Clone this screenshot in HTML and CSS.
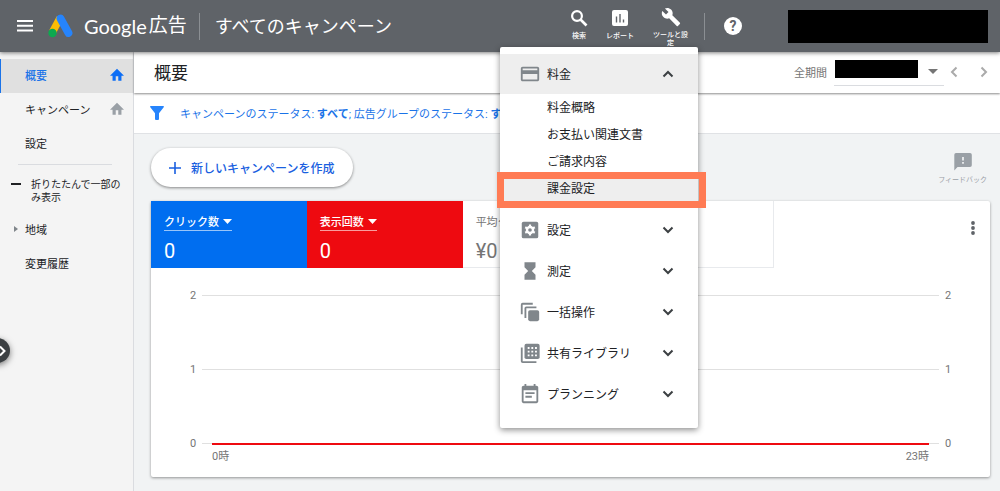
FILE: index.html
```html
<!DOCTYPE html>
<html lang="ja">
<head>
<meta charset="utf-8">
<title>Google 広告</title>
<meta name="viewport" content="width=device-width, initial-scale=1">
<link rel="stylesheet" href="styles.css">
</head>
<body>
<div class="app">
  <header class="topbar">
    <button class="menu-button" aria-label="メニュー">
      <svg width="16" height="12" viewBox="0 0 16 12"><path fill="#fff" d="M0 0h16v2H0zM0 4.7h16v2H0zM0 9.4h16v2H0z"/></svg>
    </button>
    <svg class="logo" width="26" height="24" viewBox="0 0 26 24" aria-hidden="true">
      <path stroke="#fbbc04" stroke-width="7.400" d="M12 4 4.500 18"/>
      <path stroke="#2684fc" stroke-width="7.800" stroke-linecap="round" d="m12.500 4.500 8 14.500"/>
      <circle cx="4.500" cy="19" r="4.200" fill="#0ca94f"/>
    </svg>
    <div class="brand"><span class="brand-name">Google</span><span>広告</span></div>
    <div class="bar-divider"></div>
    <div class="page-name">すべてのキャンペーン</div>

    <div class="tools">
      <button class="tool">
        <svg width="18" height="18" viewBox="0 0 18 18"><circle cx="7" cy="7" r="4.9" fill="none" stroke="#fff" stroke-width="2.2"/><path stroke="#fff" stroke-width="2.6" d="m10.5 10.5 6 6"/></svg>
        <span>検索</span>
      </button>
      <button class="tool">
        <svg width="18" height="18" viewBox="0 0 18 18"><rect x="1" y="1" width="16" height="16" rx="2" fill="#fff"/><path stroke="#5f6368" stroke-width="1.4" d="M5.5 7.5v6M9 5v8.500M12.500 10.500v3"/></svg>
        <span>レポート</span>
      </button>
      <div class="tool-anchor">
        <button class="tool tool-wide" aria-expanded="true">
          <svg width="20" height="20" viewBox="0 0 24 24"><path fill="#fff" d="m22.700 19-9.100-9.100c.9-2.300.4-5-1.500-6.900-2-2-5-2.400-7.400-1.300L9 6 6 9 1.600 4.700C.4 7.100.9 10.100 2.900 12.100c1.900 1.900 4.600 2.400 6.900 1.500l9.100 9.100c.4.4 1 .4 1.400 0l2.300-2.300c.5-.4.5-1.100.1-1.400z"/></svg>
          <span>ツールと設定</span>
        </button>
        <nav class="menu" aria-label="ツールと設定">
          <button class="menu-section open">
            <svg width="22" height="22" viewBox="0 0 24 24"><path fill="#80868b" d="M20 4H4c-1.110 0-1.990.89-1.990 2L2 18c0 1.110.89 2 2 2h16c1.110 0 2-.89 2-2V6c0-1.110-.89-2-2-2zm0 14H4v-6h16v6zm0-10H4V6h16v2z"/></svg>
            <span>料金</span>
            <svg class="caret" width="12" height="8" viewBox="0 0 12 8"><path d="m1.500 6.500 4.500-4.500 4.500 4.500"/></svg>
          </button>
          <ul class="submenu">
            <li><a href="#">料金概略</a></li>
            <li><a href="#">お支払い関連文書</a></li>
            <li><a href="#">ご請求内容</a></li>
            <li><a href="#" class="marked">課金設定</a></li>
          </ul>
          <div class="menu-group">
            <button class="menu-section">
              <svg width="22" height="22" viewBox="0 0 24 24"><rect x="3" y="3" width="18" height="18" rx="2" fill="#80868b"/><circle cx="12" cy="12" r="3.300" fill="none" stroke="#fff" stroke-width="2.600"/><path stroke="#fff" stroke-width="2.400" d="M12 6v3M12 15v3M6.800 9l2.600 1.500M14.600 13.500l2.600 1.500M6.800 15l2.600-1.500M14.600 10.500 17.200 9"/></svg>
              <span>設定</span>
              <svg class="caret" width="12" height="8" viewBox="0 0 12 8"><path d="m1.500 1.500 4.500 4.500 4.500-4.500"/></svg>
            </button>
            <button class="menu-section">
              <svg width="22" height="22" viewBox="0 0 24 24"><path fill="#80868b" d="M6 2.500h12v5.500l-4 4 4 4v5.500H6V16l4-4-4-4z"/></svg>
              <span>測定</span>
              <svg class="caret" width="12" height="8" viewBox="0 0 12 8"><path d="m1.500 1.500 4.500 4.500 4.500-4.500"/></svg>
            </button>
            <button class="menu-section">
              <svg width="22" height="22" viewBox="0 0 24 24"><rect x="10" y="10" width="12" height="12" rx="2" fill="#80868b"/><path fill="none" stroke="#80868b" stroke-width="2" d="M3 14.500V4q0-1 1-1h11M7 18.500V8q0-1 1-1h11"/></svg>
              <span>一括操作</span>
              <svg class="caret" width="12" height="8" viewBox="0 0 12 8"><path d="m1.500 1.500 4.500 4.500 4.500-4.500"/></svg>
            </button>
            <button class="menu-section">
              <svg width="22" height="22" viewBox="0 0 24 24"><rect x="6" y="2" width="16.500" height="16.500" rx="2" fill="#80868b"/><path fill="none" stroke="#80868b" stroke-width="2" d="M3 6v15q0 1 1 1h15"/><path stroke="#fff" stroke-width="2" stroke-dasharray="2 2" d="M9.500 6.500h10M9.500 10.500h10M9.500 14.500h10"/></svg>
              <span>共有ライブラリ</span>
              <svg class="caret" width="12" height="8" viewBox="0 0 12 8"><path d="m1.500 1.500 4.500 4.500 4.500-4.500"/></svg>
            </button>
            <button class="menu-section">
              <svg width="22" height="22" viewBox="0 0 24 24"><path fill="#80868b" d="M17 10H7v2h10v-2zm2-7h-1V1h-2v2H8V1H6v2H5c-1.110 0-1.990.9-1.990 2L3 20c0 1.100.89 2 2 2h14c1.100 0 2-.9 2-2V5c0-1.100-.9-2-2-2zm0 17H5V8h14v12zm-5-6H7v2h7v-2z"/></svg>
              <span>プランニング</span>
              <svg class="caret" width="12" height="8" viewBox="0 0 12 8"><path d="m1.500 1.500 4.500 4.500 4.500-4.500"/></svg>
            </button>
          </div>
        </nav>
      </div>
    </div>
    <div class="bar-divider tools-divider"></div>
    <button class="help" aria-label="ヘルプ">?</button>
    <div class="account"></div>
  </header>

  <div class="body">
    <aside class="sidebar">
      <a href="#" class="side-item active"><span>概要</span>
        <svg width="14" height="14" viewBox="1 1 22 22"><path fill="#0d6ef5" d="M10 21v-7h4v7h5v-8h4L12 2 1 13h4v8z"/></svg></a>
      <a href="#" class="side-item"><span>キャンペーン</span>
        <svg width="14" height="14" viewBox="1 1 22 22"><path fill="#9aa0a6" d="M10 21v-7h4v7h5v-8h4L12 2 1 13h4v8z"/></svg></a>
      <a href="#" class="side-item"><span>設定</span></a>
      <hr class="side-rule">
      <button class="collapse"><span class="minus"></span><span class="collapse-label">折りたたんで一部のみ表示</span></button>
      <a href="#" class="side-item region"><svg width="4" height="6" viewBox="0 0 4 6"><path fill="#80868b" d="m0 0 4 3-4 3z"/></svg><span>地域</span></a>
      <a href="#" class="side-item"><span>変更履歴</span></a>
    </aside>

    <main class="main">
      <div class="titlebar">
        <h1>概要</h1>
        <div class="period">
          <span class="period-label">全期間</span>
          <button class="period-value" aria-label="期間を選択"><span class="masked"></span>
            <svg width="10" height="5" viewBox="0 0 10 5"><path fill="#757575" d="M0 0h10L5 5z"/></svg></button>
          <button class="step" aria-label="前の期間"><svg width="8" height="12" viewBox="0 0 8 12"><path d="M6.500 1.500 2 6l4.500 4.500"/></svg></button>
          <button class="step" aria-label="次の期間"><svg width="8" height="12" viewBox="0 0 8 12"><path d="M1.500 1.500 6 6l-4.500 4.500"/></svg></button>
        </div>
      </div>
      <div class="filterbar">
        <svg width="14" height="14" viewBox="0 0 14 14"><path fill="#2684fc" d="M.8 0h12.400q1.200.1.500 1.200L9 7.200V13q0 1-1 1H6q-1 0-1-1V7.200L.3 1.200Q-.4.1.8 0z"/></svg>
        <span>キャンペーンのステータス: <b>すべて</b>; 広告グループのステータス: <b>すべて</b></span>
      </div>

      <div class="content">
        <div class="actions">
          <button class="create"><svg width="12" height="12" viewBox="0 0 12 12"><path stroke="#1a5fe0" stroke-width="1.600" d="M6 0v12M0 6h12"/></svg><span>新しいキャンペーンを作成</span></button>
          <button class="feedback"><svg width="18" height="18" viewBox="0 0 18 18"><path fill="#9aa0a6" d="M2 0h14q1.800 0 1.800 1.800v10.500q0 1.800-1.800 1.800H3.500L.3 17.500V1.800Q.3 0 2 0z"/><path stroke="#f1f3f4" stroke-width="1.700" d="M9 4v3.500M9 9v1.700"/></svg><span>フィードバック</span></button>
        </div>

        <section class="card">
          <div class="metrics">
            <div class="metric blue"><button>クリック数<svg width="9" height="5" viewBox="0 0 9 5"><path fill="#fff" d="M0 0h9L4.500 5z"/></svg></button><strong>0</strong></div>
            <div class="metric red"><button>表示回数<svg width="9" height="5" viewBox="0 0 9 5"><path fill="#fff" d="M0 0h9L4.500 5z"/></svg></button><strong>0</strong></div>
            <div class="metric"><button>平均クリ</button><strong>¥0</strong></div>
            <div class="metric"></div>
            <button class="more" aria-label="その他"><svg width="4" height="14" viewBox="0 0 4 14"><g fill="#5f6368"><circle cx="2" cy="2" r="1.900"/><circle cx="2" cy="7" r="1.900"/><circle cx="2" cy="12" r="1.900"/></g></svg></button>
          </div>
          <div class="chart">
            <div class="tick"><span>2</span><i></i><span>2</span></div>
            <div class="tick"><span>1</span><i></i><span>1</span></div>
            <div class="tick"><span>0</span><i class="series"></i><span>0</span></div>
            <div class="hours"><span>0時</span><span>23時</span></div>
          </div>
        </section>
      </div>
    </main>
  </div>
  <button class="drawer" aria-label="パネルを開く"><svg width="8" height="12" viewBox="0 0 8 12"><path d="m1 1.500 4.500 4.500L1 10.500" fill="none" stroke="#fff" stroke-width="2"/></svg></button>
</div>
</body>
</html>
```

FILE: styles.css
```css
* { box-sizing: border-box; }

body {
  margin: 0;
  font-family: Roboto, "Noto Sans CJK JP", sans-serif;
  font-size: 11px;
  color: #202124;
  background: #f1f3f4;
}

button {
  margin: 0;
  padding: 0;
  border: 0;
  background: none;
  font: inherit;
  color: inherit;
  cursor: pointer;
}

a { color: inherit; text-decoration: none; }
svg { display: block; flex: none; }

.app {
  display: flex;
  flex-direction: column;
  min-height: 100vh;
  position: relative;
  overflow: hidden;
}

/* Top bar */
.topbar {
  position: relative;
  z-index: 2;
  display: flex;
  align-items: center;
  height: 52px;
  padding: 0 12px 0 17px;
  background: #5f6368;
  color: #fff;
  box-shadow: 0 1px 4px rgba(0, 0, 0, .5);
}

.logo { margin: 0 10px 0 15px; fill: none; }

.brand {
  display: flex;
  align-items: center;
  gap: 2px;
  font-size: 19px;
  line-height: 28px;
}

.brand-name { font-family: Lato, sans-serif; font-size: 20px; }

.bar-divider { width: 1px; height: 27px; margin: 0 15px 0 12px; background: #8b8f93; }
.page-name { padding-bottom: 3px; font-size: 18px; }

.tools {
  display: flex;
  align-items: flex-start;
  align-self: stretch;
  gap: 18px;
  margin-left: auto;
}

.tool {
  display: flex;
  flex-direction: column;
  align-items: center;
  gap: 5px;
  padding-top: 9px;
  font-size: 7px;
  font-weight: 500;
  line-height: 8px;
}

.tool-anchor { position: relative; }
.tool-wide { gap: 4px; width: 37px; padding-top: 7px; }
.tools-divider { margin-left: 15px; }

.help {
  width: 18px;
  height: 18px;
  margin: 0 46px 0 4px;
  border-radius: 50%;
  background: #fff;
  color: #5f6368;
  font-size: 14px;
  font-weight: 700;
  line-height: 18px;
}

.account { width: 200px; height: 33px; background: #000; }

/* Tools menu */
.menu {
  position: absolute;
  top: 47px;
  right: -9px;
  width: 198px;
  padding: 7px 0 14px;
  background: #fff;
  color: #202124;
  border-radius: 2px;
  box-shadow: 0 2px 6px rgba(0, 0, 0, .45);
  font-size: 12px;
}

.menu-section {
  display: flex;
  align-items: center;
  gap: 6px;
  width: 100%;
  height: 40px;
  padding: 0 24px 0 19px;
}

.menu-section.open { background: #eee; }
.menu-section span { padding-bottom: 1px; }
.caret { margin-left: auto; fill: none; stroke: #3c4043; stroke-width: 2; }
.submenu { margin: 0; padding: 1px 0 0; list-style: none; }

.submenu a {
  display: block;
  padding-left: 47px;
  line-height: 27px;
}

.submenu .marked { position: relative; background: #eee; }

.submenu .marked::after {
  content: "";
  position: absolute;
  inset: -4px -8px -5px -3px;
  border: 7px solid #ff7b54;
}

.menu-group {
  display: flex;
  flex-direction: column;
  gap: 1px;
  margin-top: 7px;
}

/* Body */
.body { display: flex; flex: 1; }

.sidebar {
  flex: none;
  width: 134px;
  padding-top: 7px;
  background: #f4f4f4;
  border-right: 1px solid #dadce0;
}

.side-item {
  display: flex;
  align-items: center;
  justify-content: space-between;
  height: 34px;
  padding: 0 9px 2px 25px;
}

.side-item.active {
  padding-left: 24px;
  border-left: 1px solid #1a73e8;
  background: #e0e0e0;
  color: #1a73e8;
  font-weight: 500;
}

.side-item.region { justify-content: flex-start; gap: 7px; padding-left: 14px; }

.side-rule {
  margin: 3px 21px 0 18px;
  border: 0;
  border-top: 1px solid #dadce0;
}

.collapse {
  display: flex;
  gap: 10px;
  padding: 13px 0 9px 11px;
  font-size: 10px;
  line-height: 13px;
  text-align: left;
}

.collapse-label { width: 93px; }
.minus { width: 10px; height: 2px; margin-top: 5px; background: #202124; }

.main { flex: 1; min-width: 0; }

.titlebar {
  position: relative;
  display: flex;
  align-items: center;
  justify-content: space-between;
  height: 41px;
  padding: 0 12px 2px 20px;
  background: #fff;
  box-shadow: 0 1px 2px rgba(0, 0, 0, .45);
}

h1 { margin: 0; font-size: 17px; font-weight: 400; }

.period { display: flex; align-items: center; color: #757575; }

.period-value {
  display: flex;
  align-items: center;
  justify-content: space-between;
  width: 110px;
  height: 28px;
  margin: 0 6px 0 7px;
  padding: 0 6px 4px 1px;
  border-bottom: 1px solid #dadce0;
}

.period-value svg { margin-top: 4px; }
.masked { width: 83px; height: 18px; background: #000; }
.step { margin-left: 22px; fill: none; stroke: #aaa; stroke-width: 2; }
.period-value + .step { margin-left: 0; }

.filterbar {
  display: flex;
  align-items: center;
  gap: 16px;
  height: 41px;
  padding-left: 16px;
  background: #fff;
  border-bottom: 1px solid #e0e2e5;
  color: #1a73e8;
  white-space: nowrap;
}

.content { padding: 14px 10px 13px 17px; }

.actions { display: flex; justify-content: space-between; align-items: flex-start; }

.create {
  display: flex;
  align-items: center;
  gap: 10px;
  height: 39px;
  padding: 0 19px 0 18px;
  border-radius: 20px;
  background: #fff;
  box-shadow: 0 1px 3px rgba(0, 0, 0, .45);
  color: #1a5fe0;
  font-size: 12px;
  font-weight: 500;
}

.feedback {
  display: flex;
  flex-direction: column;
  align-items: center;
  gap: 4px;
  padding: 5px 3px 0;
  color: #9aa0a6;
  font-size: 7px;
  line-height: 10px;
}

/* Overview card */
.card {
  margin-top: 14px;
  background: #fff;
  border-radius: 2px;
  box-shadow: 0 1px 3px rgba(0, 0, 0, .4);
}

.metrics {
  display: grid;
  grid-template-columns: repeat(4, 13fr) 18fr;
  height: 67px;
}

.metric {
  display: flex;
  flex-direction: column;
  align-items: flex-start;
  padding: 11px 13px 0;
  border: solid #e8eaed;
  border-width: 0 1px 1px 0;
  color: #757575;
}

.metric button {
  display: flex;
  align-items: center;
  gap: 4px;
  height: 19px;
  border-bottom: 1px solid transparent;
  white-space: nowrap;
}

.metric strong { margin-top: 8px; font-size: 20px; font-weight: 400; line-height: 24px; }
.blue, .red { border: 0; color: #fff; font-weight: 500; }
.blue { background: #006ef0; }
.red { background: #ee0a10; }
.blue button, .red button { border-bottom-color: rgba(255, 255, 255, .6); }
.more { justify-self: end; align-self: start; padding: 20px 15px; }

.chart { padding: 20px 39px 13px; color: #757575; }

.tick { display: flex; align-items: center; gap: 6px; height: 14px; margin-bottom: 60px; }
.tick span { width: 6px; }
.tick i { position: relative; flex: 1; height: 1px; background: #e0e0e0; }
.tick:nth-child(3) { margin: 0; }

.series::after {
  content: "";
  position: absolute;
  inset: 0 10px -1px;
  background: #ee0a10;
}

.hours { display: flex; justify-content: space-between; padding: 0 22px; line-height: 14px; }

.drawer {
  position: absolute;
  top: 338px;
  left: -15px;
  width: 25px;
  height: 25px;
  padding-left: 14px;
  border-radius: 50%;
  background: #3c4043;
  box-shadow: 0 2px 6px rgba(0, 0, 0, .5);
}
```
